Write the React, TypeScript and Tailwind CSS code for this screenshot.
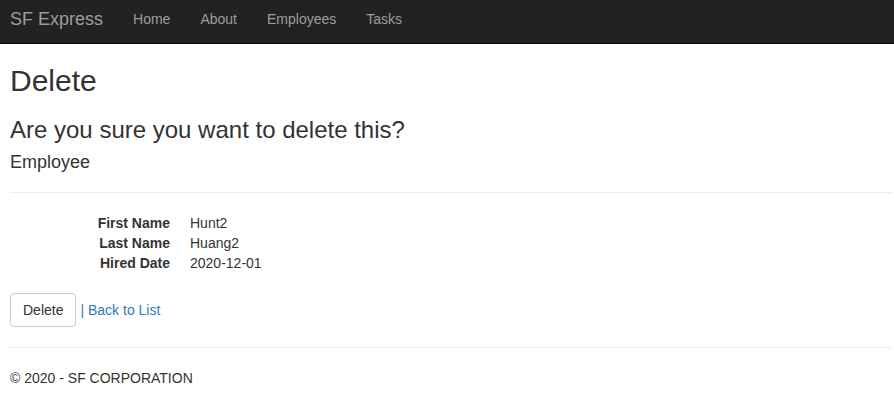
export default function App() {
  const fields = [
    { label: "First Name", value: "Hunt2" },
    { label: "Last Name", value: "Huang2" },
    { label: "Hired Date", value: "2020-12-01" },
  ];

  return (
    <div className="min-h-screen bg-white text-[#333] text-[14px] leading-[20px] font-['Liberation_Sans',Arial,sans-serif]">
      {/* Navbar */}
      <nav className="h-[44px] bg-[#222] border-b border-[#080808] flex items-start pl-[10px] pt-[9px]">
        <a className="text-[18px] leading-[20px] text-[#9d9d9d] pr-[15px] cursor-pointer">
          SF Express
        </a>
        <ul className="flex">
          {["Home", "About", "Employees", "Tasks"].map((item) => (
            <li key={item}>
              <a className="block px-[15px] text-[14px] leading-[20px] text-[#9d9d9d] cursor-pointer">
                {item}
              </a>
            </li>
          ))}
        </ul>
      </nav>

      {/* Body */}
      <div className="pl-[10px] pr-[1px]">
        <h2 className="mt-[20px] text-[30px] leading-[33px] font-medium">Delete</h2>
        <h3 className="mt-[20px] text-[24px] leading-[26.4px] font-medium">
          Are you sure you want to delete this?
        </h3>
        <div>
          <h4 className="mt-[10px] text-[18px] leading-[19.8px] font-medium">Employee</h4>
          <hr className="mt-[19px] mb-[20px] border-0 border-t border-[#eee]" />
          <dl className="grid grid-cols-[160px_1fr] gap-x-[20px]">
            {fields.map((f) => (
              <div key={f.label} className="contents">
                <dt className="text-right font-bold">{f.label}</dt>
                <dd>{f.value}</dd>
              </div>
            ))}
          </dl>

          <form className="mt-[20px] flex items-baseline">
            <button
              type="button"
              className="bg-white border border-[#ccc] rounded-[4px] px-[12px] py-[6px] text-[14px] leading-[20px] text-[#333]"
            >
              Delete
            </button>
            <a className="ml-[4px] text-[#337ab7] cursor-pointer">| Back to List</a>
          </form>
        </div>

        <hr className="mt-[20px] mb-[20px] border-0 border-t border-[#eee]" />
        <footer>
          <p>© 2020 - SF CORPORATION</p>
        </footer>
      </div>
    </div>
  );
}
